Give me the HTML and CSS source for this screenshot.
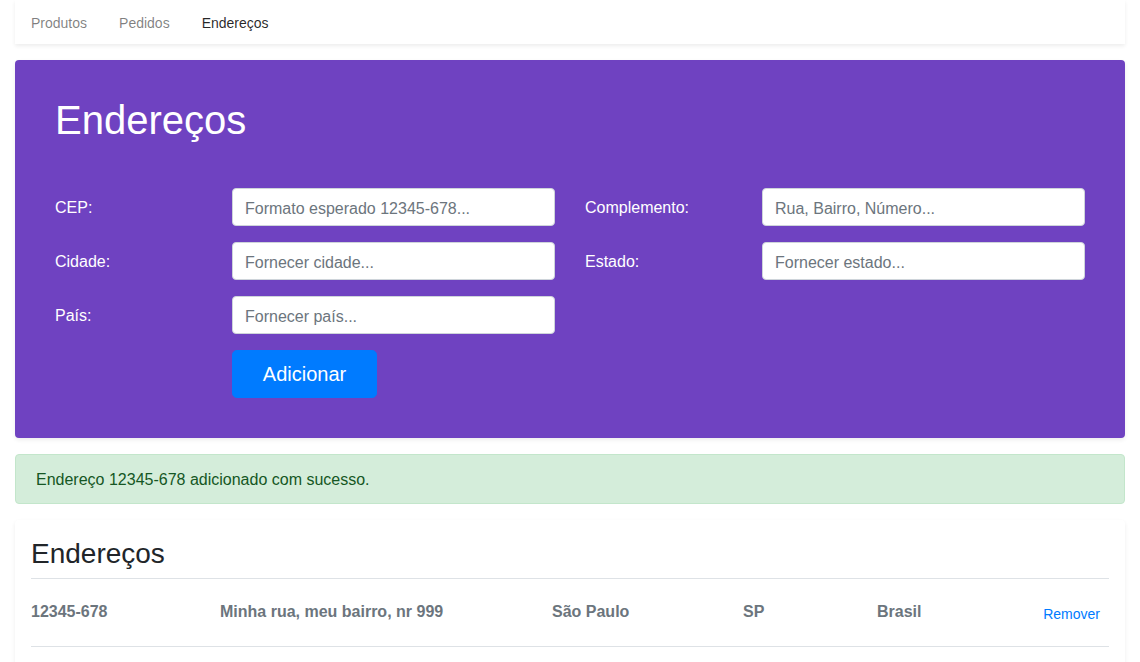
FILE: index.html
```html
<!DOCTYPE html>
<html lang="pt">
<head>
<meta charset="utf-8">
<title>Endereços</title>
<link rel="stylesheet" href="styles.css">
</head>
<body>
<div class="container">
  <nav class="topnav">
    <a class="nav-link" href="#">Produtos</a>
    <a class="nav-link" href="#">Pedidos</a>
    <a class="nav-link active" href="#">Endereços</a>
  </nav>

  <section class="jumbo">
    <h1 class="jumbo-title">Endereços</h1>
    <form class="form-grid">
      <div class="field">
        <label class="field-label">CEP:</label>
        <input class="field-input" type="text" placeholder="Formato esperado 12345-678...">
      </div>
      <div class="field">
        <label class="field-label">Complemento:</label>
        <input class="field-input" type="text" placeholder="Rua, Bairro, Número...">
      </div>
      <div class="field">
        <label class="field-label">Cidade:</label>
        <input class="field-input" type="text" placeholder="Fornecer cidade...">
      </div>
      <div class="field">
        <label class="field-label">Estado:</label>
        <input class="field-input" type="text" placeholder="Fornecer estado...">
      </div>
      <div class="field">
        <label class="field-label">País:</label>
        <input class="field-input" type="text" placeholder="Fornecer país...">
      </div>
      <div class="field empty"></div>
      <div class="field">
        <span class="field-label"></span>
        <div class="field-action"><button type="button" class="btn-primary">Adicionar</button></div>
      </div>
    </form>
  </section>

  <div class="alert">Endereço 12345-678 adicionado com sucesso.</div>

  <section class="card">
    <h3 class="card-title">Endereços</h3>
    <div class="addr-row">
      <span class="cell">12345-678</span>
      <span class="cell">Minha rua, meu bairro, nr 999</span>
      <span class="cell">São Paulo</span>
      <span class="cell">SP</span>
      <span class="cell">Brasil</span>
      <button type="button" class="btn-link">Remover</button>
    </div>
  </section>
</div>
</body>
</html>
```

FILE: styles.css
```css
* { box-sizing: border-box; }

body {
  margin: 0;
  background: #fff;
  font-family: "Liberation Sans", Arial, sans-serif;
  font-size: 16px;
  line-height: 1.5;
  color: #212529;
}

.container {
  padding: 0 15px;
}

.topnav {
  display: flex;
  align-items: center;
  height: 44px;
  padding-top: 2px;
  background: #fff;
  box-shadow: 0 2px 4px rgba(0, 0, 0, 0.075);
  margin-bottom: 16px;
}

.nav-link {
  padding: 0 16px;
  font-size: 14px;
  line-height: 21px;
  color: rgba(0, 0, 0, 0.5);
  text-decoration: none;
}

.nav-link.active {
  color: rgba(0, 0, 0, 0.85);
}

.jumbo {
  background: #6f42c1;
  border-radius: 4px;
  padding: 36px 40px 40px;
  margin-bottom: 16px;
  box-shadow: 0 2px 4px rgba(0, 0, 0, 0.075);
}

.jumbo-title {
  margin: 0 0 44px;
  font-size: 40px;
  font-weight: 400;
  line-height: 48px;
  color: #fff;
}

.form-grid {
  display: grid;
  grid-template-columns: 500px 500px;
  column-gap: 30px;
  row-gap: 16px;
  margin: 0;
}

.field {
  display: flex;
  align-items: center;
}

.field-label {
  flex: 0 0 177px;
  color: #fff;
  line-height: 24px;
  padding-top: 2px;
}

.field-input {
  flex: 1;
  min-width: 0;
  height: 38px;
  padding: 8px 12px 4px;
  border: 1px solid #ced4da;
  border-radius: 4px;
  font-family: inherit;
  font-size: 16px;
  color: #495057;
  background: #fff;
}

.field-input::placeholder {
  color: #6c757d;
  opacity: 1;
}

.field-action {
  flex: 1;
}

.btn-primary {
  display: block;
  width: 145px;
  height: 48px;
  padding: 8px 16px;
  border: 1px solid #007bff;
  border-radius: 4.8px;
  background: #007bff;
  color: #fff;
  font-family: inherit;
  font-size: 20px;
  line-height: 30px;
}

.alert {
  height: 50px;
  padding: 13px 20px 11px;
  background: #d4edda;
  border: 1px solid #c3e6cb;
  border-radius: 4px;
  color: #155724;
  margin-bottom: 16px;
}

.card {
  background: #fff;
  border-radius: 4px;
  padding: 17px 16px 16px;
  box-shadow: 0 2px 4px rgba(0, 0, 0, 0.075);
  min-height: 160px;
}

.card-title {
  margin: 0 0 7px;
  font-size: 28px;
  font-weight: 400;
  line-height: 33.6px;
  color: #212529;
}

.addr-row {
  display: grid;
  grid-template-columns: 189px 332px 191px 134px 1fr auto;
  align-items: center;
  height: 69px;
  border-top: 1px solid #dee2e6;
  border-bottom: 1px solid #dee2e6;
}

.cell {
  font-weight: 700;
  color: #6c757d;
  line-height: 24px;
}

.btn-link {
  border: 0;
  background: none;
  padding: 4px 9px 0 8px;
  font-family: inherit;
  font-size: 14px;
  line-height: 21px;
  color: #007bff;
}
```
